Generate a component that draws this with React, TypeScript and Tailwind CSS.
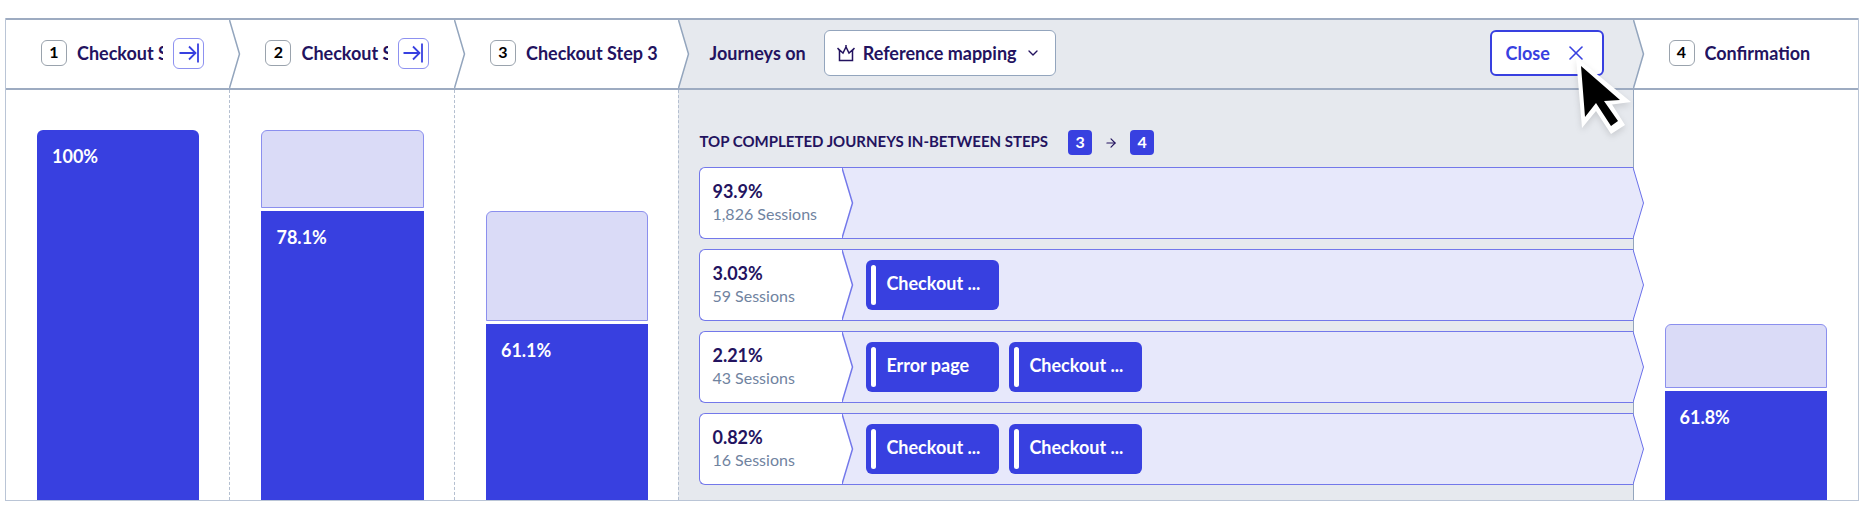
import { ArrowRight, ChevronDown, X } from "lucide-react";

interface Step {
  id: number;
  label: string;
  rate: string;
  // share of the full bar height, in percent
  previous: number;
  current: number;
  expandable?: boolean;
}

interface Journey {
  rate: string;
  sessions: string;
  pages: string[];
}

const steps: Step[] = [
  { id: 1, label: "Checkout Step 1", rate: "100%", previous: 100, current: 100, expandable: true },
  { id: 2, label: "Checkout Step 2", rate: "78.1%", previous: 100, current: 78.1, expandable: true },
  { id: 3, label: "Checkout Step 3", rate: "61.1%", previous: 78.1, current: 47.7 },
  { id: 4, label: "Confirmation", rate: "61.8%", previous: 47.7, current: 29.5 },
];

const journeys: Journey[] = [
  { rate: "93.9%", sessions: "1,826 Sessions", pages: [] },
  { rate: "3.03%", sessions: "59 Sessions", pages: ["Checkout ..."] },
  { rate: "2.21%", sessions: "43 Sessions", pages: ["Error page", "Checkout ..."] },
  { rate: "0.82%", sessions: "16 Sessions", pages: ["Checkout ...", "Checkout ..."] },
];

function HeaderArrow({ className }: { className: string }) {
  return (
    <svg
      viewBox="0 0 12 70"
      preserveAspectRatio="none"
      className={`absolute top-0 left-full z-10 -ml-px h-full w-3 ${className}`}
      aria-hidden="true"
    >
      <path d="M0.500 0L10.500 35L0.500 70" stroke="#93a5bd" strokeWidth="1.5" />
    </svg>
  );
}

function StepHeader({ step, last }: { step: Step; last?: boolean }) {
  return (
    <div className={`relative flex min-w-0 items-center pb-0.5 pl-[35px] ${step.expandable ? "pr-[26px]" : "pr-3"}`}>
      <span className="flex size-[26px] shrink-0 items-center justify-center rounded-md border border-[#9aa3ad] bg-white pb-0.5 text-base font-bold text-black">
        {step.id}
      </span>
      <h2 className="ml-2.5 min-w-0 flex-1 overflow-hidden text-lg font-bold whitespace-nowrap">{step.label}</h2>
      {step.expandable && (
        <button
          type="button"
          aria-label={`Show journeys after ${step.label}`}
          className="ml-2.5 flex size-[31px] shrink-0 items-center justify-center rounded-md border border-[#8d91f0] text-[#3840e0]"
        >
          <svg viewBox="0 0 20 20" className="size-5" fill="none" stroke="currentColor" strokeWidth="1.8" aria-hidden="true">
            <path d="M0.500 10H17M10 3.500L16.500 10L10 16.500M19 0.500V19.500" />
          </svg>
        </button>
      )}
      {!last && <HeaderArrow className="fill-white" />}
    </div>
  );
}

function StepBar({ step }: { step: Step }) {
  const lost = step.previous - step.current;

  return (
    <div className="flex h-full flex-col justify-end px-[31px] pt-10">
      <div className="flex h-[370px] flex-col justify-end">
        {lost > 0 && (
          <div className="pb-[3px]" style={{ height: `${lost}%` }}>
            <div className="h-full rounded-t-md border border-[#8b8fee] bg-[#dadbf7]" />
          </div>
        )}
        <div
          className={`bg-[#3840e0] px-[15px] pt-3 text-lg font-bold text-white ${lost > 0 ? "" : "rounded-t-md"}`}
          style={{ height: `${step.current}%` }}
        >
          {step.rate}
        </div>
      </div>
    </div>
  );
}

function PageChip({ label }: { label: string }) {
  return (
    <li className="flex h-[50px] w-[133px] items-center rounded-md bg-[#3840e0] p-[5px] text-lg font-bold text-white">
      <span className="h-full w-[5px] rounded-sm bg-white" />
      <span className="ml-2.5 pb-1 whitespace-nowrap">{label}</span>
    </li>
  );
}

function JourneyRow({ journey }: { journey: Journey }) {
  return (
    <li className="-mr-[11px] flex h-[72px]">
      <div className="flex w-[143px] flex-col justify-center rounded-l-md border border-r-0 border-[#7378ea] bg-white pb-0.5 pl-3">
        <span className="text-lg leading-6 font-bold">{journey.rate}</span>
        <span className="text-base leading-[22px] text-[#70839f]">{journey.sessions}</span>
      </div>
      <div className="flex flex-1 items-center border-y border-[#7378ea] bg-[#e7e8fb]">
        <svg viewBox="0 0 12 70" preserveAspectRatio="none" className="h-full w-3" aria-hidden="true">
          <path d="M0 0L10.500 35L0 70" fill="white" stroke="#7378ea" strokeWidth="1.5" />
        </svg>
        <ul className="ml-3 flex gap-2.5">
          {journey.pages.map((page, i) => (
            <PageChip key={i} label={page} />
          ))}
        </ul>
      </div>
      <svg viewBox="0 0 11 72" preserveAspectRatio="none" className="h-full w-[11px]" aria-hidden="true">
        <path d="M0 0.500L10.500 36L0 71.500" fill="#e7e8fb" stroke="#6a70e9" />
      </svg>
    </li>
  );
}

function StepBadge({ id }: { id: number }) {
  return (
    <span className="flex h-[25px] w-6 items-center justify-center rounded bg-[#3840e0] pb-0.5 text-base font-bold text-white">
      {id}
    </span>
  );
}

export default function App() {
  const [first, second, third, last] = steps;

  return (
    <main className="bg-white pt-[18px] pr-[15px] pb-5 pl-[5px] font-[Lato,'Liberation_Sans',sans-serif] text-[#23135f]">
      <div className="relative border-x border-b border-[#bac5d6]">
        <header className="grid h-[72px] grid-cols-[1fr_1fr_1fr_4.250fr_1fr] border-y-2 border-[#9dabc1]">
          <StepHeader step={first} />
          <StepHeader step={second} />
          <StepHeader step={third} />
          <div className="relative flex items-center bg-[#e6e9ee] pr-[30px] pb-0.5 pl-[30px]">
            <span className="text-lg font-bold">Journeys on</span>
            <button
              type="button"
              className="ml-[18px] flex h-[46px] items-center rounded-md border border-[#93a5bd] bg-white pr-3.5 pl-3 text-lg font-bold"
            >
              <svg viewBox="0 0 18 18" className="mr-2 size-[18px]" fill="none" stroke="currentColor" strokeWidth="1.5" aria-hidden="true">
                <path d="M0.500 4L2.500 6.500M17.500 4L15.500 6.500M9 1V3M2.500 16.500V6L6 9L9 3L12 9L15.500 6V16.500Z" />
              </svg>
              Reference mapping
              <ChevronDown className="ml-2 size-4" />
            </button>
            <button
              type="button"
              className="ml-auto flex h-[46px] w-[114px] items-center gap-3.5 rounded-md border-2 border-[#3840e0] bg-white pl-3.5 text-lg font-bold text-[#3840e0]"
            >
              Close
              <X className="size-6" strokeWidth={1.6} />
            </button>
            <HeaderArrow className="fill-[#e6e9ee]" />
          </div>
          <StepHeader step={last} last />
        </header>

        <div className="grid grid-cols-[1fr_1fr_1fr_4.250fr_1fr]">
          <StepBar step={first} />
          <div className="-ml-px border-l border-dashed border-[#b4bfd0]">
            <StepBar step={second} />
          </div>
          <div className="-ml-px border-l border-dashed border-[#b4bfd0]">
            <StepBar step={third} />
          </div>
          <section className="relative -ml-px border-r border-l border-[#93a5bd] border-l-[#b4bfd0] bg-[#e6e9ee] pt-10 pl-5 [border-left-style:dashed]">
            <div className="flex items-center">
              <h3 className="pb-0.5 text-[15px] font-bold uppercase">Top completed journeys in-between steps</h3>
              <div className="ml-5 flex items-center gap-3">
                <StepBadge id={3} />
                <ArrowRight className="size-3.5" />
                <StepBadge id={4} />
              </div>
            </div>
            <ul className="mt-3 flex flex-col gap-2.5">
              {journeys.map((journey) => (
                <JourneyRow key={journey.rate} journey={journey} />
              ))}
            </ul>
          </section>
          <StepBar step={last} />
        </div>

        {/* Mouse pointer resting on the close button */}
        <svg
          viewBox="0 0 90 110"
          className="pointer-events-none absolute top-[22px] right-[208px] z-20 h-[110px] w-[90px] drop-shadow-md"
          aria-hidden="true"
        >
          <path d="M16 17L71 62L52 64.500L65 85L51 94L36 71L22 88Z" fill="white" />
          <path d="M21 26L60 60L44 61L58 81L51 86L36 63L25 77Z" fill="black" />
        </svg>
      </div>
    </main>
  );
}
